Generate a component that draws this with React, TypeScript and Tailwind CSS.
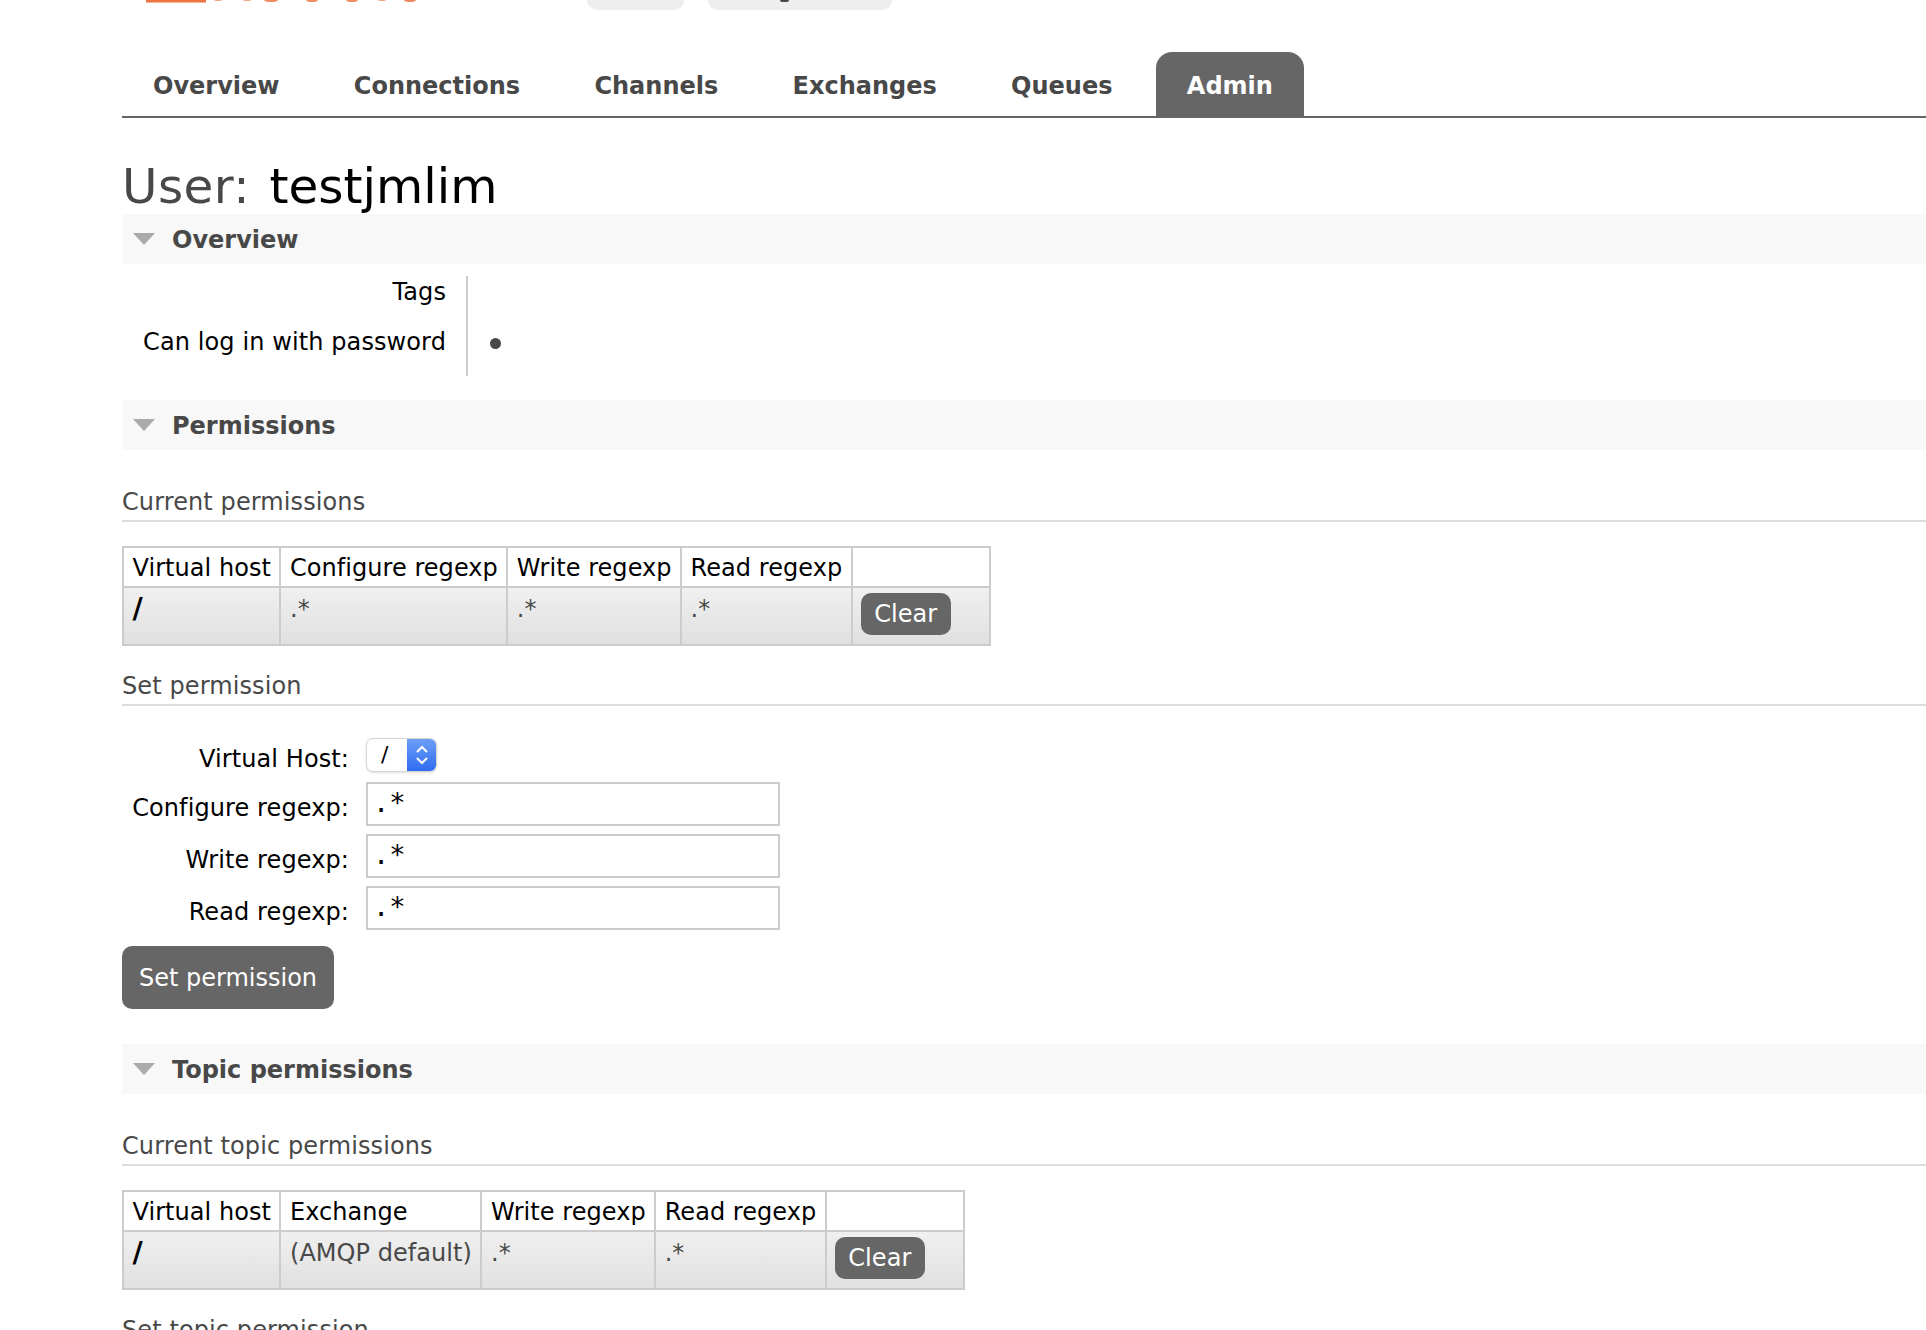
const font = "[font-family:'DejaVu_Sans',Verdana,sans-serif]";

function SectionBar({ title }: { title: string }) {
  return (
    <div className="flex h-[50px] items-center bg-[#f8f8f8] pl-[11px]">
      <svg width="22" height="14" viewBox="0 0 22 14" className="mr-[17px]">
        <polygon points="0,1 22,1 11,13" fill="#aaaaaa" />
      </svg>
      <span className="pt-[2px] text-[24px] font-bold text-[#484848]">{title}</span>
    </div>
  );
}

function SubHeading({ title }: { title: string }) {
  return (
    <h3 className="border-b-2 border-[#dddddd] text-[24px] leading-[36px] tracking-[0.1px] text-[#484848]">{title}</h3>
  );
}

function ClearButton() {
  return (
    <button className="mb-[4px] block h-[42px] rounded-[10px] bg-[#666666] px-[13.5px] text-[24px] leading-none text-white">Clear</button>
  );
}

function PermTable({ cols, first }: { cols: string[]; first: string[] }) {
  return (
    <table className="border-collapse border-2 border-[#cccccc] text-[24px] tracking-[0.05px]">
      <thead>
        <tr>
          {cols.map((c) => (
            <th key={c} className="h-[40px] whitespace-nowrap border-2 border-[#cccccc] px-[8.5px] pt-[1px] text-left font-normal leading-none text-black">
              {c}
            </th>
          ))}
          <th className="w-[138px] border-2 border-[#cccccc]"></th>
        </tr>
      </thead>
      <tbody>
        <tr className="bg-gradient-to-b from-[#f0f0f0] to-[#e0e0e0]">
          {first.map((c, i) => (
            <td key={i} className={`h-[58px] border-2 border-[#cccccc] px-[8.5px] pb-[15px] align-middle leading-none whitespace-nowrap ${i === 0 ? "text-[28px] font-bold text-black" : "text-[#484848]"}`}>
              {c}
            </td>
          ))}
          <td className="border-2 border-[#cccccc] px-[8px]">
            <ClearButton />
          </td>
        </tr>
      </tbody>
    </table>
  );
}

function FormRow({ label, children }: { label: string; children: React.ReactNode }) {
  return (
    <div className="flex items-center">
      <label className="w-[244px] whitespace-nowrap pt-[8px] pr-[17px] text-right text-[24px] tracking-[0.1px] text-black">{label}</label>
      {children}
    </div>
  );
}

function RegexInput() {
  return (
    <div className="flex h-[44px] w-[414px] items-center border-2 border-[#cccccc] bg-white px-[5px] pb-[2px] font-['DejaVu_Sans_Mono',monospace] text-[27px] text-black">
      .*
    </div>
  );
}

export default function App() {
  const tabs = ["Overview", "Connections", "Channels", "Exchanges", "Queues"];
  return (
    <div className={`h-[1330px] w-full overflow-hidden bg-white pl-[122px] ${font}`}>
      {/* clipped header */}
      <div className="relative h-[52px]">
        <svg width="300" height="4" viewBox="0 0 300 4" className="absolute left-[24px] top-0">
          <rect x="0" y="0" width="60" height="2.5" fill="#ee7442" />
          <ellipse cx="72" cy="0" rx="4" ry="1" fill="#f2a580" />
          <ellipse cx="101" cy="0" rx="4" ry="1" fill="#f2a580" />
          <ellipse cx="125" cy="0" rx="7" ry="2" fill="#ee8a5e" />
          <ellipse cx="166" cy="0" rx="6" ry="2" fill="#ee8a5e" />
          <ellipse cx="206" cy="0" rx="6" ry="2" fill="#ee8a5e" />
          <ellipse cx="236" cy="0" rx="4" ry="1" fill="#f2a580" />
          <ellipse cx="264" cy="0" rx="6" ry="2" fill="#ee8a5e" />
        </svg>
        <div className="absolute left-[465px] top-0 h-[10px] w-[97px] rounded-b-[10px] bg-[#eeeeee]"></div>
        <div className="absolute left-[586px] top-0 h-[10px] w-[184px] rounded-b-[10px] bg-[#eeeeee]">
          <div className="absolute left-[72px] top-0 h-[2px] w-[9px] rounded-b-full bg-[#484848]"></div>
        </div>
      </div>

      <nav className="flex h-[66px] border-b-2 border-[#666666]">
        {tabs.map((t) => (
          <span key={t} className="mr-[12.3px] flex items-center px-[31px] pt-[3px] text-[24px] font-bold text-[#484848]">
            {t}
          </span>
        ))}
        <span className="flex h-[65px] items-center rounded-t-[16px] bg-[#666666] px-[31px] pt-[2px] text-[24px] font-bold text-white">Admin</span>
      </nav>

      <h1 className="mt-[40px] h-[56px] text-[48.5px] leading-[56px] font-normal text-[#484848]">
        <span className="tracking-[0.4px]">User:</span> <span className="ml-[4px] text-black">testjmlim</span>
      </h1>

      <SectionBar title="Overview" />
      <div className="mt-[12px] flex h-[100px] text-[24px] tracking-[0.1px] text-black">
        <div className="flex w-[346px] flex-col border-r-2 border-[#cccccc] pr-[20px] text-right">
          <div className="h-[50px] leading-[33px]">Tags</div>
          <div className="h-[50px] leading-[33px]">Can log in with password</div>
        </div>
        <div className="flex flex-col justify-end pb-[27px] pl-[22px]">
          <div className="h-[11px] w-[11px] rounded-full bg-[#484848]"></div>
        </div>
      </div>

      <div className="mt-[24px]"><SectionBar title="Permissions" /></div>
      <div className="mt-[34px]"><SubHeading title="Current permissions" /></div>
      <div className="mt-[24px]">
        <PermTable cols={["Virtual host", "Configure regexp", "Write regexp", "Read regexp"]} first={["/", ".*", ".*", ".*"]} />
      </div>

      <div className="mt-[22px]"><SubHeading title="Set permission" /></div>
      <div className="mt-[27px] flex flex-col">
        <div className="h-[49px]">
          <FormRow label="Virtual Host:">
            <div className="flex h-[34px] w-[71px] overflow-hidden rounded-[7px] border border-[#d5d5d5] bg-white shadow-sm">
              <span className="flex-1 pl-[14px] text-[22px] leading-[32px] text-black">/</span>
              <span className="flex w-[29px] items-center justify-center bg-gradient-to-b from-[#6d9df6] to-[#2f6cf0]">
                <svg width="16" height="28" viewBox="0 0 16 28" fill="none" stroke="white" strokeWidth="2">
                  <path d="M3 11l5-5 5 5M3 17l5 5 5-5" />
                </svg>
              </span>
            </div>
          </FormRow>
        </div>
        <div className="flex flex-col gap-[8px]">
          <FormRow label="Configure regexp:"><RegexInput /></FormRow>
          <FormRow label="Write regexp:"><RegexInput /></FormRow>
          <FormRow label="Read regexp:"><RegexInput /></FormRow>
        </div>
      </div>
      <button className="mt-[16px] block h-[63px] w-[212px] rounded-[10px] bg-[#666666] text-[24px] text-white">Set permission</button>

      <div className="mt-[35px]"><SectionBar title="Topic permissions" /></div>
      <div className="mt-[34px]"><SubHeading title="Current topic permissions" /></div>
      <div className="mt-[24px]">
        <PermTable cols={["Virtual host", "Exchange", "Write regexp", "Read regexp"]} first={["/", "(AMQP default)", ".*", ".*"]} />
      </div>
      <div className="mt-[22px]"><SubHeading title="Set topic permission" /></div>
    </div>
  );
}
